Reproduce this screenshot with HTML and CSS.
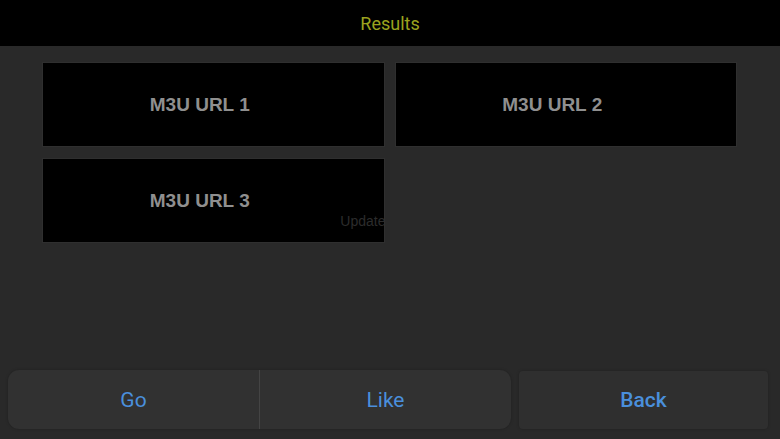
FILE: index.html
```html
<!DOCTYPE html>
<html>
<head>
<meta charset="utf-8">
<link rel="stylesheet" href="styles.css">
</head>
<body>
<div class="app">
  <header class="topbar"><span class="title">Results</span></header>
  <main class="content">
    <div class="grid">
      <div class="card"><span class="card-label">M3U URL 1</span></div>
      <div class="card"><span class="card-label">M3U URL 2</span></div>
      <div class="card"><span class="card-label">M3U URL 3</span><span class="update">Update</span></div>
    </div>
  </main>
  <footer class="toolbar">
    <div class="segment">
      <button class="btn">Go</button>
      <div class="divider"></div>
      <button class="btn">Like</button>
    </div>
    <button class="btn back">Back</button>
  </footer>
</div>
</body>
</html>
```
FILE: styles.css
```css
html, body {
  margin: 0;
  padding: 0;
  background: #292929;
}
.app {
  width: 780px;
  height: 439px;
  display: flex;
  flex-direction: column;
  font-family: "Liberation Sans", Arial, sans-serif;
  overflow: hidden;
}
.topbar {
  height: 46px;
  background: #000;
  display: flex;
  align-items: center;
  justify-content: center;
  flex: none;
}
.title {
  color: #9ba31f;
  font-family: Roboto, "Liberation Sans", sans-serif;
  font-size: 18px;
  padding-top: 1px;
}
.content {
  flex: 1;
  padding: 16px 43px 0 42px;
}
.grid {
  display: grid;
  grid-template-columns: 1fr 1fr;
  column-gap: 10px;
  row-gap: 11px;
}
.card {
  position: relative;
  height: 85px;
  background: #000;
  box-sizing: border-box;
  border: 1px solid #2f2f2f;
  display: flex;
  align-items: center;
  justify-content: center;
  padding-right: 27px;
  overflow: hidden;
}
.card-label {
  color: #8f8f8f;
  font-weight: bold;
  font-size: 19px;
}
.update {
  position: absolute;
  right: -2px;
  top: 54px;
  font-size: 14px;
  color: #2c2c2c;
}
.toolbar {
  flex: none;
  display: grid;
  grid-template-columns: 503px 1fr;
  gap: 8px;
  padding: 0 12px 10px 8px;
  height: 59px;
}
.segment {
  display: flex;
  background: #313131;
  border-radius: 11px;
  box-shadow: 0 0 3px rgba(0,0,0,0.25);
}
.btn {
  flex: 1;
  border: none;
  background: transparent;
  color: #4a8fdc;
  font-family: Roboto, "Liberation Sans", sans-serif;
  font-size: 21px;
  padding: 0;
  margin: 0;
  cursor: pointer;
}
.divider {
  width: 1px;
  background: #444;
}
.back {
  background: #2f2f2f;
  font-weight: 500;
  border-radius: 4px;
  box-shadow: 0 0 3px rgba(0,0,0,0.25);
  margin-top: 1px;
}
```
